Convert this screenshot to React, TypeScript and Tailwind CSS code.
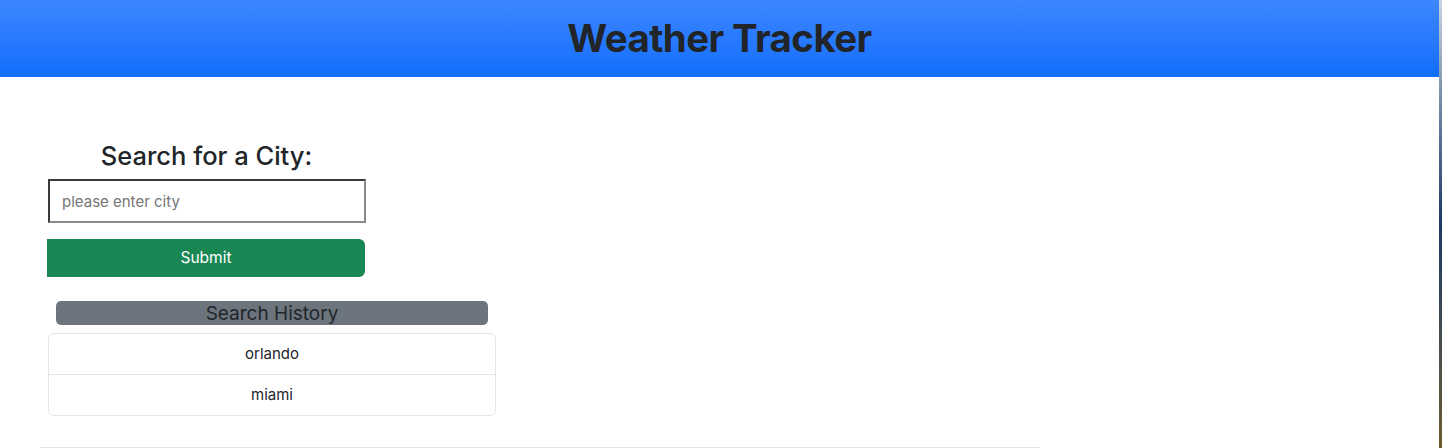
export default function App() {
  return (
    <div className="flex w-[1442px] h-[448px] overflow-hidden bg-white font-['Inter','Liberation_Sans',sans-serif] text-[#212529]">
      <div className="flex flex-col w-[1439px]">
        <header className="flex h-[77px] items-center justify-center bg-gradient-to-b from-[#3d86ff] to-[#0d6efd]">
          <h1 className="text-[38.5px] font-bold leading-none tracking-[-0.6px] text-[#212529]">Weather Tracker</h1>
        </header>

        <div className="flex flex-col pl-[47px] pt-[61px]">
          <div className="flex flex-col w-[319px] items-start">
            <h3 className="self-center text-[25.5px] font-medium leading-[36px]">Search for a City:</h3>
            <input
              type="text"
              placeholder="please enter city"
              className="mt-[5px] ml-[1px] h-[44px] w-[318px] border-2 border-t-[#3a3a3a] border-l-[#3a3a3a] border-r-[#8a8a8a] border-b-[#8a8a8a] px-3 text-[15px] placeholder:text-[#757575] outline-none"
            />
            <button className="mt-[16px] h-[38px] w-[318px] rounded-r-[6px] bg-[#198754] text-[15.5px] text-white">
              Submit
            </button>
          </div>

          <div className="flex flex-col w-[448px] ml-[1px] mt-[24px]">
            <div className="mx-[8px] h-[24px] rounded-[5px] bg-[#6c757d] text-center text-[19px] leading-[25px]">
              Search History
            </div>
            <ul className="mt-[8px] rounded-[6px] border border-[#e3e5e8] text-[15px]">
              <li className="h-[41px] flex items-center justify-center border-b border-[#e3e5e8]">orlando</li>
              <li className="h-[40px] flex items-center justify-center">miami</li>
            </ul>
          </div>
        </div>

        <div className="mt-auto ml-[40px] w-[1000px] h-px bg-[#e2e2e2]" />
      </div>
      <div className="w-[3px] bg-gradient-to-b from-[#c8d4e4] via-[#1b3a66] to-[#6b5a2a]" />
    </div>
  );
}
